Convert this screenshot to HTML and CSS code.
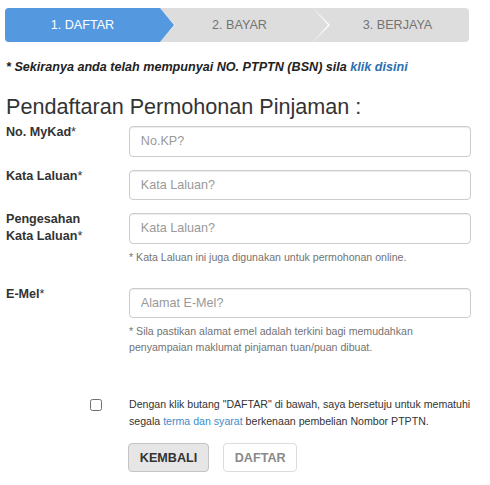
FILE: index.html
```html
<!DOCTYPE html>
<html lang="ms">
<head>
<meta charset="utf-8">
<title>Pendaftaran</title>
<link rel="stylesheet" href="styles.css">
</head>
<body>
<div class="page">
  <div class="stepper">
    <div class="step step-active">1. DAFTAR</div>
    <div class="step step-mid">2. BAYAR</div>
    <div class="step step-last">3. BERJAYA</div>
  </div>

  <p class="note">* Sekiranya anda telah mempunyai NO. PTPTN (BSN) sila <a href="#" class="note-link">klik disini</a></p>

  <h3 class="title">Pendaftaran Permohonan Pinjaman :</h3>

  <form class="form">
    <div class="form-row">
      <label class="label">No. MyKad<span class="req">*</span></label>
      <div class="field"><input class="input" type="text" placeholder="No.KP?"></div>
    </div>
    <div class="form-row">
      <label class="label">Kata Laluan<span class="req">*</span></label>
      <div class="field"><input class="input" type="password" placeholder="Kata Laluan?"></div>
    </div>
    <div class="form-row">
      <label class="label">Pengesahan<br>Kata Laluan<span class="req">*</span></label>
      <div class="field">
        <input class="input" type="password" placeholder="Kata Laluan?">
        <p class="help">* Kata Laluan ini juga digunakan untuk permohonan online.</p>
      </div>
    </div>
    <div class="form-row">
      <label class="label">E-Mel<span class="req">*</span></label>
      <div class="field">
        <input class="input" type="text" placeholder="Alamat E-Mel?">
        <p class="help">* Sila pastikan alamat emel adalah terkini bagi memudahkan<br>penyampaian maklumat pinjaman tuan/puan dibuat.</p>
      </div>
    </div>

    <div class="form-row agree-row">
      <div class="check-cell"><input type="checkbox" class="check"></div>
      <p class="agree">Dengan klik butang "DAFTAR" di bawah, saya bersetuju untuk mematuhi<br>segala <a href="#" class="agree-link">terma dan syarat</a> berkenaan pembelian Nombor PTPTN.</p>
    </div>

    <div class="form-row">
      <div></div>
      <div class="buttons">
        <button type="button" class="btn btn-back">KEMBALI</button>
        <button type="button" class="btn btn-submit" disabled>DAFTAR</button>
      </div>
    </div>
  </form>
</div>
</body>
</html>
```

FILE: styles.css
```css
* { box-sizing: border-box; }

body {
  margin: 0;
  background: #fff;
  font-family: "Liberation Sans", Arial, Helvetica, sans-serif;
  font-size: 12.6px;
  color: #333;
}

.page {
  padding: 8px 0 0 5px;
}

/* Stepper */
.stepper {
  display: flex;
  width: 464px;
  height: 34px;
  border-radius: 4px;
  overflow: hidden;
  background: #dddddd;
}

.step {
  position: relative;
  display: flex;
  align-items: center;
  justify-content: center;
  height: 34px;
  font-size: 12.6px;
  color: #737373;
}

.step-active {
  width: 155px;
  background: #5499e0;
  color: #fff;
  z-index: 3;
}

.step-active::before {
  content: "";
  position: absolute;
  top: 0;
  right: -15px;
  border-left: 15px solid #f2f2f2;
  border-top: 17px solid transparent;
  border-bottom: 17px solid transparent;
}

.step-active::after {
  content: "";
  position: absolute;
  top: 0;
  right: -14px;
  border-left: 14px solid #5499e0;
  border-top: 17px solid transparent;
  border-bottom: 17px solid transparent;
}

.step-mid {
  width: 153px;
  padding-left: 6px;
  z-index: 2;
}

.step-mid::before {
  content: "";
  position: absolute;
  top: 0;
  right: -17px;
  border-left: 17px solid #ffffff;
  border-top: 17px solid transparent;
  border-bottom: 17px solid transparent;
}

.step-mid::after {
  content: "";
  position: absolute;
  top: 0;
  right: -15px;
  border-left: 15px solid #dddddd;
  border-top: 17px solid transparent;
  border-bottom: 17px solid transparent;
}

.step-last {
  flex: 1;
  padding-left: 13px;
}

/* Note */
.note {
  margin: 16px 0 0 1px;
  font-weight: bold;
  font-style: italic;
  line-height: 18px;
  color: #222;
}

.note-link {
  color: #2d6fb0;
  text-decoration: none;
}

.title {
  margin: 18px 0 0 1px;
  font-size: 21.6px;
  font-weight: normal;
  line-height: 26px;
  color: #333;
}

/* Form */
.form {
  margin-top: 6px;
}

.form-row {
  display: grid;
  grid-template-columns: 123px 342px;
  margin-bottom: 13px;
  padding-left: 1px;
}

.label {
  margin-top: -2px;
  font-weight: bold;
  line-height: 17px;
  color: #333;
}

.req {
  font-weight: normal;
}

.input {
  display: block;
  width: 342px;
  height: 30.6px;
  padding: 0 10.8px;
  border: 1px solid #cccccc;
  border-radius: 4px;
  font-family: inherit;
  font-size: 12.6px;
  color: #555;
  box-shadow: inset 0 1px 1px rgba(0, 0, 0, 0.075);
}

.input::placeholder {
  color: #999;
}

.help {
  margin: 5px 0 10px;
  font-size: 10.6px;
  line-height: 16px;
  color: #737373;
}

.agree-row {
  margin-top: 31px;
  margin-bottom: 13px;
}

.check-cell {
  display: flex;
  justify-content: flex-end;
  padding-right: 27px;
  padding-top: 3px;
}

.check {
  appearance: none;
  -webkit-appearance: none;
  margin: 0;
  width: 12px;
  height: 12px;
  border: 1px solid #6e6e6e;
  border-radius: 2.5px;
  background: #fff;
}

.agree {
  margin: 0;
  font-size: 10.6px;
  line-height: 17px;
  color: #333;
  white-space: nowrap;
}

.agree-link {
  color: #428bca;
  text-decoration: none;
}

.buttons {
  display: flex;
  gap: 14px;
  margin-left: -1px;
}

.btn {
  height: 29px;
  padding: 0 10.8px;
  border-radius: 4px;
  font-family: inherit;
  font-size: 12.6px;
  font-weight: bold;
}

.btn-back {
  background: #e6e6e6;
  border: 1px solid #c4c4c4;
  color: #333;
}

.btn-submit {
  background: #fff;
  border: 1px solid #dcdcdc;
  color: #8a8a8a;
}
```
